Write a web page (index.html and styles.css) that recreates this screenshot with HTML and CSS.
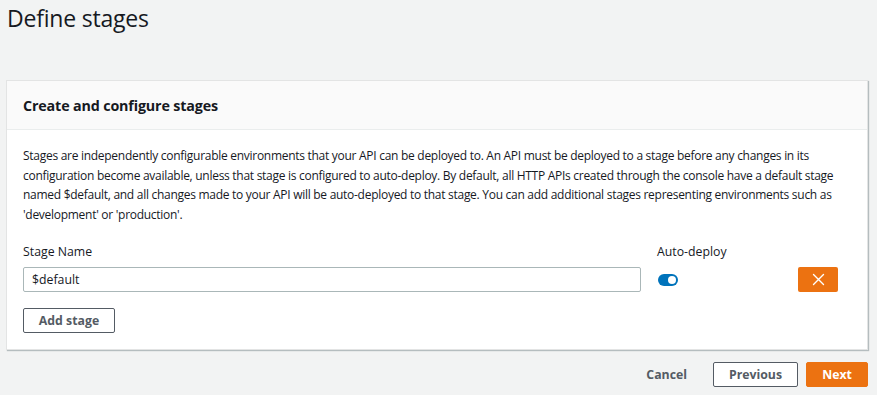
FILE: index.html
```html
<!DOCTYPE html>
<html>
<head>
<meta charset="utf-8">
<link rel="stylesheet" href="styles.css">
</head>
<body>
<div class="page">
  <h1 class="title">Define stages</h1>
  <div class="card">
    <div class="card-header">
      <h2 class="card-title">Create and configure stages</h2>
    </div>
    <div class="card-body">
      <p class="desc">Stages are independently configurable environments that your API can be deployed to. An API must be deployed to a stage before any changes in its configuration become available, unless that stage is configured to auto-deploy. By default, all HTTP APIs created through the console have a default stage named $default, and all changes made to your API will be auto-deployed to that stage. You can add additional stages representing environments such as 'development' or 'production'.</p>
      <div class="stage-grid">
        <div class="label">Stage Name</div>
        <div class="label">Auto-deploy</div>
        <div></div>
        <div class="input">$default</div>
        <div class="toggle-cell"><span class="toggle"><span class="knob"></span></span></div>
        <div class="remove-cell">
          <button class="btn-remove" aria-label="Remove">
            <svg width="13" height="13" viewBox="0 0 13 13"><path d="M1.5 1.5 L11.5 11.5 M11.5 1.5 L1.5 11.5" stroke="#fff" stroke-width="1.4" stroke-linecap="round"/></svg>
          </button>
        </div>
      </div>
      <button class="btn btn-normal">Add stage</button>
    </div>
  </div>
  <div class="footer">
    <button class="btn-link">Cancel</button>
    <button class="btn btn-normal btn-prev">Previous</button>
    <button class="btn btn-primary">Next</button>
  </div>
</div>
</body>
</html>
```

FILE: styles.css
```css
* { box-sizing: border-box; }
html, body {
  margin: 0;
  padding: 0;
  background: #f2f3f3;
  font-family: "Open Sans", "Noto Sans", Arial, sans-serif;
  color: #16191f;
}
.page {
  width: 877px;
  height: 395px;
  padding: 0 9px 0 6px;
}
.title {
  margin: 0;
  padding: 1px 0 0 1px;
  height: 80px;
  font-size: 23px;
  font-weight: 400;
  line-height: 34px;
  letter-spacing: -0.2px;
}
.card {
  background: #fff;
  border: 1px solid #e3e4e4;
  box-shadow: 1px 1px 1px rgba(0,28,36,0.25);
  width: 862px;
}
.card-header {
  background: #fafafa;
  border-bottom: 1px solid #eaeded;
  height: 49px;
  display: flex;
  align-items: center;
  padding: 0 16px;
}
.card-title {
  margin: 0;
  font-size: 14.3px;
  font-weight: 700;
  letter-spacing: -0.15px;
}
.card-body {
  padding: 16px 16px 16px 16px;
}
.desc {
  margin: 0;
  font-size: 12px;
  line-height: 19.5px;
  letter-spacing: -0.28px;
}
.stage-grid {
  display: grid;
  grid-template-columns: 618px 125px 40px;
  column-gap: 16px;
  margin-top: 19px;
}
.label {
  font-size: 12.3px;
  font-weight: 500;
  line-height: 18px;
  height: 24px;
}
.input {
  height: 25px;
  border: 1px solid #aab7b8;
  border-radius: 2px;
  padding: 0 8px;
  font-size: 12.3px;
  line-height: 23px;
}
.toggle-cell {
  display: flex;
  align-items: center;
}
.toggle {
  width: 20px;
  height: 12px;
  border-radius: 6px;
  background: #0073bb;
  position: relative;
  margin-left: 1px;
}
.knob {
  position: absolute;
  right: 2px;
  top: 2px;
  width: 8px;
  height: 8px;
  border-radius: 50%;
  background: #fff;
}
.remove-cell {
  display: flex;
  justify-content: flex-start;
}
.btn-remove {
  width: 40px;
  height: 25px;
  border: none;
  border-radius: 2px;
  background: #ec7211;
  display: flex;
  align-items: center;
  justify-content: center;
  padding: 0;
}
.btn {
  font-family: inherit;
  font-size: 12.3px;
  font-weight: 700;
  height: 25px;
  border-radius: 2px;
  padding: 0 18px;
  cursor: pointer;
}
.card-body .btn-normal {
  margin-top: 16px;
  width: 92px;
  padding: 0;
}
.btn-normal {
  background: #fff;
  border: 1px solid #545b64;
  color: #545b64;
}
.footer {
  display: flex;
  justify-content: flex-end;
  align-items: center;
  margin-top: 12px;
  width: 862px;
  gap: 8px;
}
.btn-link {
  font-family: inherit;
  font-size: 12.3px;
  font-weight: 700;
  color: #545b64;
  background: none;
  border: none;
  padding: 0 18px;
  height: 25px;
}
.btn-prev {
  width: 85px;
  padding: 0;
}
.btn-primary {
  width: 62px;
  padding: 0;
  background: #ec7211;
  border: 1px solid #ec7211;
  color: #fff;
}
```
